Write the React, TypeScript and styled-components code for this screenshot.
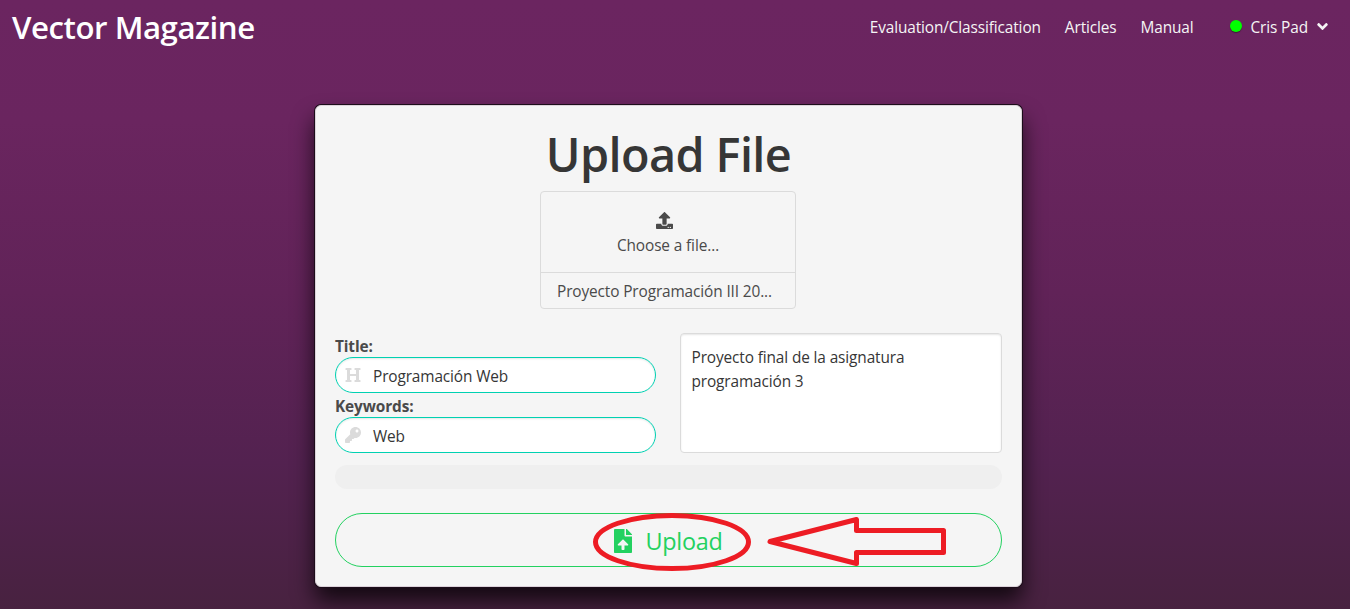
import React from "react";
import styled, { createGlobalStyle } from "styled-components";
import { FaUpload, FaHeading, FaKey, FaFileUpload, FaAngleDown } from "react-icons/fa";

const GlobalStyle = createGlobalStyle`
  *, *::before, *::after { box-sizing: border-box; }
  html, body { margin: 0; padding: 0; }
  body {
    font-family: "Open Sans", "Noto Sans", sans-serif;
    font-size: 15.4px;
    line-height: 24px;
    color: #4a4a4a;
    overflow: hidden;
  }
`;

const Text = styled.span<{ $track?: number }>`
  letter-spacing: ${({ $track = -0.12 }) => $track}px;
  white-space: nowrap;
`;

const Page = styled.div`
  height: 609px;
  overflow: hidden;
  background: linear-gradient(to bottom, #6b2560 0%, #6a255f 20%, #612358 48%, #532250 76%, #482240 100%);
`;

const Navbar = styled.header`
  display: flex;
  align-items: center;
  justify-content: space-between;
  height: 56px;
  padding: 0 19px 2px 12px;
  color: #f5f5f5;
`;

const Brand = styled.h1`
  margin: 0;
  font-size: 31.2px;
  line-height: 36px;
  font-weight: 600;
  color: #fff;
`;

const Nav = styled.nav`
  display: flex;
  align-items: center;
  gap: 24px;
  padding-top: 2px;
`;

const UserMenu = styled.div`
  display: flex;
  align-items: center;
  margin-left: 12px;
`;

const StatusDot = styled.i`
  width: 12px;
  height: 12px;
  margin: 0 9px 4px 0;
  border-radius: 50%;
  background: #00ff00;
  box-shadow: 0 1px 1px rgba(0, 0, 0, 0.4);
`;

const Caret = styled(FaAngleDown)`
  margin: 0 0 4px 6px;
  font-size: 17px;
`;

const Card = styled.main`
  width: 707px;
  height: 482px;
  margin: 49px 0 0 315px;
  padding: 22px 19px 19px;
  border-radius: 6px;
  background: #f5f5f5;
  border: 1px solid #dcd2da;
  box-shadow: 0 0 0 1px #1c0d1a, 0 14px 22px rgba(0, 0, 0, 0.75);
`;

const Heading = styled.h2`
  margin: 0;
  height: 63px;
  font-size: 46.8px;
  line-height: 52px;
  font-weight: 600;
  color: #363636;
  text-align: center;
`;

const FilePicker = styled.label`
  display: flex;
  flex-direction: column;
  width: 256px;
  height: 118px;
  margin: 0 0 0 205px;
  border: 1px solid #dbdbdb;
  border-radius: 4px;
`;

const PickerCta = styled.span`
  display: flex;
  flex-direction: column;
  align-items: center;
  flex: none;
  height: 81px;
  padding-top: 20px;
  border-bottom: 1px solid #dbdbdb;
`;

const UploadIcon = styled(FaUpload)`
  margin: 0 8px 5px 0;
  font-size: 17px;
`;

const FileName = styled.span`
  padding: 7px 16px 5px;
`;

const Fields = styled.div`
  display: grid;
  grid-template-columns: 321px 322px;
  gap: 24px;
  margin-top: 24px;
`;

const Label = styled.label`
  display: block;
  height: 24px;
  padding-top: 2px;
  font-weight: 700;
`;

const InputBox = styled.div`
  display: flex;
  align-items: center;
  height: 36px;
  padding: 4px 10px 0;
  border: 1px solid #00d1b2;
  border-radius: 18px;
  background: #fff;
  box-shadow: inset 0 1px 2px rgba(10, 10, 10, 0.1);
  color: #363636;

  svg {
    margin: 0 12px 4px -1px;
    font-size: 16px;
    color: #dbdbdb;
  }
`;

const FieldStack = styled.div``;

const Description = styled.div`
  height: 120px;
  padding: 12px 10.500px;
  border: 1px solid #dbdbdb;
  border-radius: 4px;
  background: #fff;
  box-shadow: inset 0 1px 2px rgba(10, 10, 10, 0.1);
  color: #363636;
`;

const Progress = styled.div`
  height: 24px;
  margin-top: 12px;
  border-radius: 12px;
  background: #efefef;
`;

const SubmitButton = styled.div`
  position: relative;
  display: flex;
  align-items: center;
  justify-content: center;
  gap: 11px;
  height: 54px;
  margin-top: 24px;
  padding: 2px 4px 0 0;
  border: 1px solid #23d160;
  border-radius: 27px;
  font-size: 23.4px;
  color: #23d160;
`;

const FileIcon = styled(FaFileUpload)`
  margin-bottom: 1px;
  font-size: 24px;
`;

const Annotation = styled.svg`
  position: absolute;
  left: 254px;
  top: -6px;
`;

export default function App() {
  return (
    <Page>
      <GlobalStyle />
      <Navbar>
        <Brand><Text $track={-0.45}>Vector Magazine</Text></Brand>
        <Nav>
          <Text>Evaluation/Classification</Text>
          <Text>Articles</Text>
          <Text>Manual</Text>
          <UserMenu>
            <StatusDot />
            <Text>Cris Pad</Text>
            <Caret />
          </UserMenu>
        </Nav>
      </Navbar>
      <Card>
        <Heading><Text $track={-0.6}>Upload File</Text></Heading>
        <FilePicker>
          <PickerCta>
            <UploadIcon />
            <Text>Choose a file…</Text>
          </PickerCta>
          <FileName><Text>Proyecto Programación III 20...</Text></FileName>
        </FilePicker>
        <Fields>
          <FieldStack>
            <Label><Text>Title:</Text></Label>
            <InputBox><FaHeading /><Text>Programación Web</Text></InputBox>
            <Label><Text>Keywords:</Text></Label>
            <InputBox><FaKey /><Text>Web</Text></InputBox>
          </FieldStack>
          <Description>
            <Text>Proyecto final de la asignatura<br />programación 3</Text>
          </Description>
        </Fields>
        <Progress />
        <SubmitButton>
          <FileIcon />
          <Text $track={-0.3}>Upload</Text>
          <Annotation width="360" height="64" viewBox="590 508 360 64" fill="none" stroke="#ed1c24" strokeWidth="5">
            <ellipse cx="672" cy="542" rx="76.5" ry="26.5" />
            <path d="M770 541.5L856.500 519.500V530.500H943.500V552.500H856.500V563.500Z" strokeLinejoin="round" />
          </Annotation>
        </SubmitButton>
      </Card>
    </Page>
  );
}
